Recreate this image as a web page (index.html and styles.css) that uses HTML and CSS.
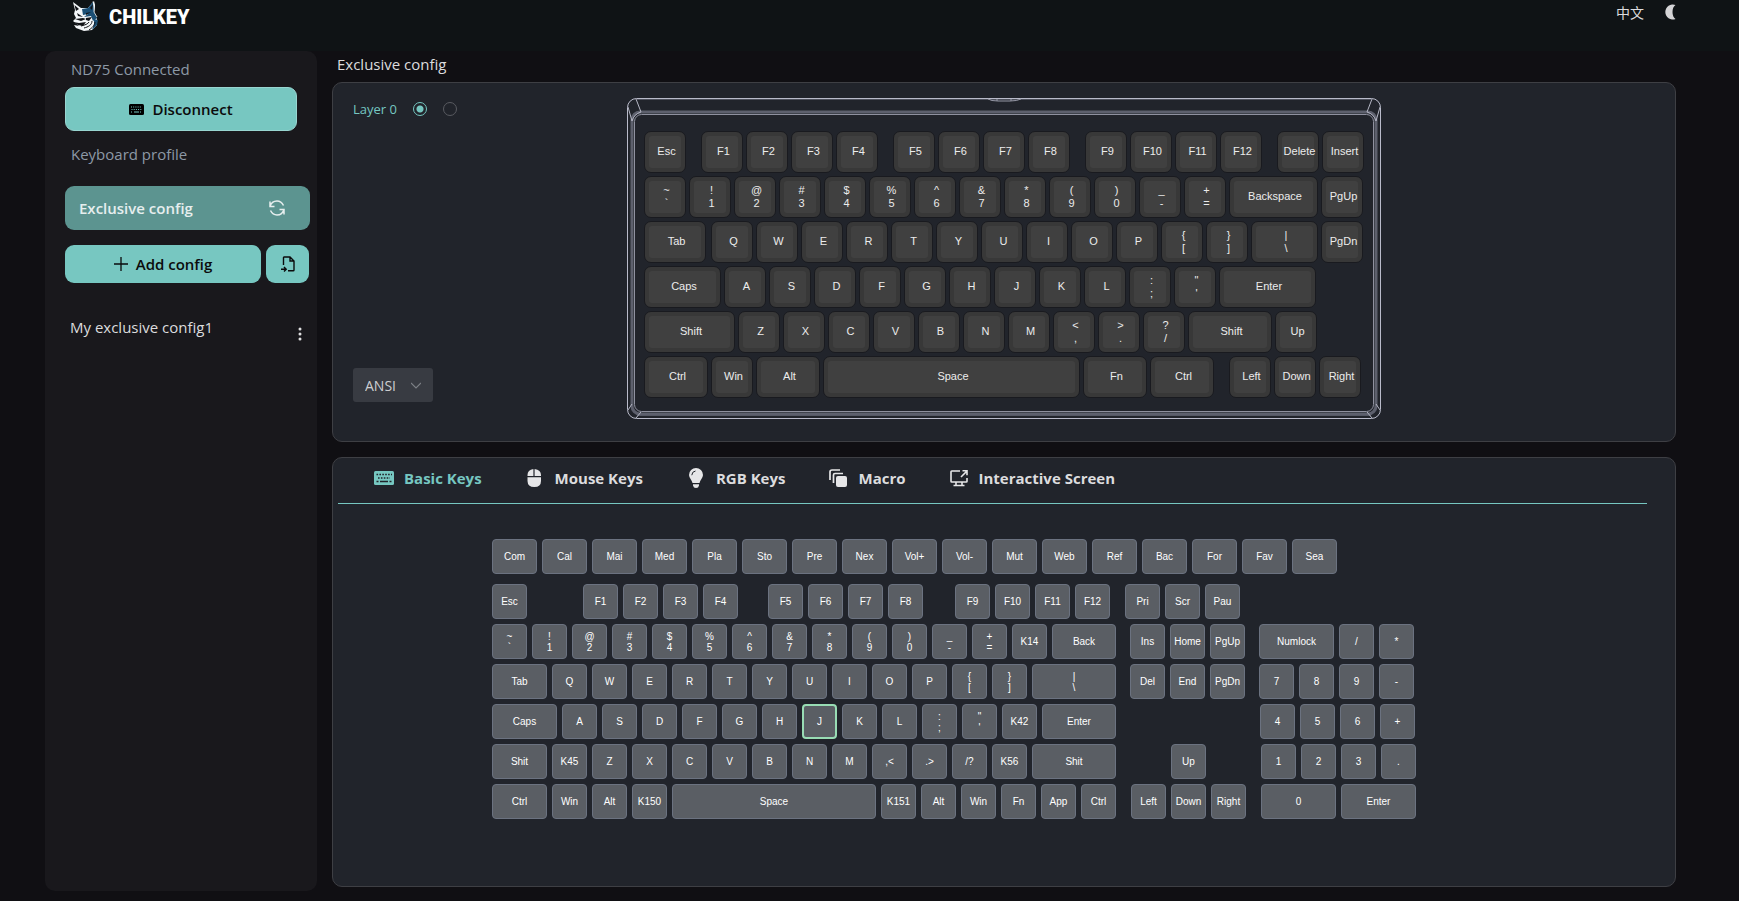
FILE: index.html
```html
<!DOCTYPE html>
<html lang="en">
<head>
<meta charset="utf-8">
<title>CHILKEY</title>
<link rel="stylesheet" href="styles.css">
</head>
<body>
<header class="topbar">
  <a class="brand" href="#">
    <svg class="brand-mark" viewBox="0 0 28 32" aria-hidden="true">
      <path fill="#f4f7f9" d="M1 2 9 8 16 8 22 1 23 5 22 13 25 19 25 25 20 30 12 31 4 28 2 25 7 26 1 21 4 18 2 14 3 10z"/>
      <path fill="#121418" d="M2.500 5 7 9 4 11zM1 22l6 1 7-1-3 4-5-1zM3 19l8-1 3 1-5 2zM5 13l6 4-5-1zM14 18l6-1-3 4-3-1z"/>
      <path fill="#1b4f75" d="M10 9l6-1 5-6 1 10 3 6-4 3-2-5-7 1 4-3-5 1zM22 19l4 1-1 5-5 5 2-6z"/>
      <path fill="#121418" d="M14 13l5-1-5 3zM18 8l3-4-1 6z"/>
      <path fill="none" stroke="#121418" d="M20 21c0 4-4 6-8 7M23 22c0 3-3 6-6 8M17 22c-1 2-4 3-8 4"/>
      <path fill="none" stroke="#f4f7f9" stroke-width=".8" d="M21 1.500 22.500 6 22 12 25 17"/>
    </svg>
    <span class="brand-name">CHILKEY</span>
  </a>
  <div class="topbar-tools">
    <button class="tool" type="button" lang="zh">中文</button>
    <button class="tool tool-moon" type="button" aria-label="Dark mode">
      <svg viewBox="0 0 12 16" width="12" height="16" aria-hidden="true"><path fill="#d4d4d6" d="M11.500 1A7.500 7.500 0 1 0 11.500 15Q8.500 13 8.500 8T11.500 1z"/></svg>
    </button>
  </div>
</header>

<div class="layout">
  <aside class="sidebar">
    <p class="side-label">ND75 Connected</p>
    <button class="btn btn-disconnect" type="button">
      <svg viewBox="0 0 15 11" width="15" height="11" aria-hidden="true"><rect width="15" height="11" rx="1.500"/><path stroke="#77c7c1" stroke-dasharray="1 1.200" d="M2 3h11M2.500 5.500h10M2 8h2M11 8h2"/><path stroke="#77c7c1" d="M5 8h5"/></svg>
      <span>Disconnect</span>
    </button>
    <p class="side-label side-label-profile">Keyboard profile</p>
    <button class="btn btn-current" type="button">
      <span>Exclusive config</span>
      <svg viewBox="0 0 16 16" width="16" height="16" fill="none" stroke="#e6eeee" stroke-width="1.500" aria-hidden="true"><path d="M1 6.500C2 3 5 1 8 1s5 1.500 6.500 4.500M1 1.500v5h4.500M15 9.500C14 13 11 15 8 15S3 13.500 1.500 10.500M15 14.500v-5h-4.500"/></svg>
    </button>
    <div class="add-row">
      <button class="btn btn-add" type="button">
        <svg viewBox="0 0 14 14" width="14" height="14" stroke="#0b0b0c" stroke-width="1.300" aria-hidden="true"><path d="M7 0v14M0 7h14"/></svg>
        <span>Add config</span>
      </button>
      <button class="btn btn-import" type="button" aria-label="Import config">
        <svg viewBox="0 0 16 16" width="16" height="16" fill="none" stroke="#0b0b0c" stroke-width="1.400" aria-hidden="true"><path d="M3.500 9V1.500Q3.500 1 4 1h6l4 4v9q0 .8-.8.8H8M10 1v4h4M1 13.200h5M4 11l2.200 2.200L4 15.400"/></svg>
      </button>
    </div>
    <div class="config-item">
      <span>My exclusive config1</span>
      <button class="more" type="button" aria-label="More">
        <svg viewBox="0 0 4 14" width="4" height="14" fill="#dedee0" aria-hidden="true"><circle cx="2" cy="2" r="1.500"/><circle cx="2" cy="7" r="1.500"/><circle cx="2" cy="12" r="1.500"/></svg>
      </button>
    </div>
  </aside>

  <main class="main">
    <h1 class="title">Exclusive config</h1>
    <section class="panel board-panel">
      <div class="board-tools">
        <div class="layers">
          <span>Layer 0</span>
          <input type="radio" name="layer" aria-label="Layer 0" checked>
          <input type="radio" name="layer" aria-label="Layer 1">
        </div>
        <div class="select">
          <select aria-label="Key layout"><option>ANSI</option><option>ISO</option></select>
          <svg viewBox="0 0 10 7" width="10" height="7" fill="none" stroke="#7d8086" stroke-width="1.200" aria-hidden="true"><path d="M0 1l5 5 5-5"/></svg>
        </div>
      </div>
      <div class="board">
        <svg class="board-frame" viewBox="0 0 754 321" fill="none" aria-hidden="true">
          <path stroke="#4d505c" d="M10 1.500h734M10 317.500h734"/>
          <rect x="5" y="14" width="744" height="302" rx="8" stroke="#5d606d" stroke-width="3"/>
          <rect x=".5" y=".5" width="753" height="320" rx="9" stroke="#b9bbca"/>
          <rect x="7.500" y="16.500" width="739" height="297" rx="7" stroke="#8f919f"/>
          <path stroke="#b4b6c4" d="M9 1l5 13M1 9l4 14M745 1l-5 13M753 9l-4 14M1 312l4-6M9 320l5-6M753 312l-4-6M745 320l-5-6M5 23q2-7 9-9M749 23q-2-7-9-9"/>
          <path stroke="#9698a6" d="M361 1q3 2 10 2h12q7 0 11-2M370 1v2M384 1v2"/>
        </svg>
        <div class="rows" id="board"></div>
      </div>
    </section>

    <section class="panel keys-panel">
      <div class="tabs" role="tablist">
        <button class="tab" type="button" role="tab" aria-selected="true">
          <svg viewBox="0 0 20 14" width="20" height="14" aria-hidden="true"><rect width="20" height="14" rx="1.500" fill="#76c7c1"/><g stroke="#21242b" stroke-width="1.600"><path stroke-dasharray="1.600 1.300" d="M2.500 3.500H18"/><path stroke-dasharray="1.600 1.300" d="M4 7h12"/><path d="M2.500 10.500h2M6 10.500h8M15.500 10.500h2"/></g></svg>
          <span>Basic Keys</span>
        </button>
        <button class="tab" type="button" role="tab" aria-selected="false">
          <svg viewBox="0 0 20 20" width="20" height="20" fill="#e6e6e8" aria-hidden="true"><path d="M8.400 1v7H2.500V7q0-5.200 5.900-6zM9.600 1v7h6.400V7q0-5.200-6.400-6zM2.500 9.200H16V13q0 6-6.700 6t-6.800-6z"/></svg>
          <span>Mouse Keys</span>
        </button>
        <button class="tab" type="button" role="tab" aria-selected="false">
          <svg viewBox="0 0 20 20" width="20" height="20" fill="#e6e6e8" aria-hidden="true"><path d="M10 0a7 7 0 0 1 7 7c0 3-3 5-3.500 8h-7C6 12 3 10 3 7a7 7 0 0 1 7-7zM7 16.200h6v1.300Q12.500 20 10 20t-3-2.500z"/><path d="M5.800 7.200Q6 3.500 9.500 3" fill="none" stroke="#21242b"/></svg>
          <span>RGB Keys</span>
        </button>
        <button class="tab" type="button" role="tab" aria-selected="false">
          <svg viewBox="0 0 20 20" width="20" height="20" aria-hidden="true"><rect x="8" y="8" width="11" height="11" rx="2" fill="#e6e6e8"/><path d="M5.500 15V7q0-1.500 1.500-1.500h8M2 12V4q0-2 2-2h8" fill="none" stroke="#e6e6e8" stroke-width="1.700"/></svg>
          <span>Macro</span>
        </button>
        <button class="tab" type="button" role="tab" aria-selected="false">
          <svg viewBox="0 0 20 20" width="20" height="20" fill="none" stroke="#e6e6e8" stroke-width="1.600" aria-hidden="true"><path d="M11 3H2.800Q2 3 2 3.800v9.400q0 .8.800.8h14.400q.8 0 .8-.8V10M7 14v3.500M13 14v3.500M4.500 17.500h11M12 9l6-6M13.500 2.800H18v4.500"/></svg>
          <span>Interactive Screen</span>
        </button>
      </div>
      <div class="pad rows" id="pad"></div>
    </section>
  </main>
</div>
<script src="keys.js"></script>
</body>
</html>
```

FILE: styles.css
```css
* { box-sizing: border-box; }

body {
  margin: 0;
  min-height: 100vh;
  display: flex;
  flex-direction: column;
  background: #100f13;
  color: #dcdcde;
  font-family: "Open Sans", "Noto Sans", "Noto Sans CJK SC", sans-serif;
  font-size: 15px;
}

button, select {
  font: inherit;
  color: inherit;
  border: 0;
  margin: 0;
  padding: 0;
  background: none;
}

.topbar {
  display: flex;
  justify-content: space-between;
  align-items: flex-start;
  height: 51px;
  padding: 0 63px 0 72px;
  background: #0f1315;
}
.brand {
  display: flex;
  align-items: flex-start;
  gap: 9px;
  color: #fff;
  text-decoration: none;
}
.brand-mark { width: 28px; height: 32px; }
.brand-name {
  font: 900 20px/34px Roboto, "Liberation Sans", sans-serif;
}
.topbar-tools { display: flex; align-items: flex-start; gap: 20px; }
.tool {
  font: 14px/24px "Noto Sans CJK SC", sans-serif;
  color: #dcdcde;
}
.tool-moon { padding-top: 4px; line-height: 0; }

.layout {
  flex: 1;
  display: flex;
  gap: 15px;
  padding: 0 63px 10px 45px;
}

.sidebar {
  width: 272px;
  flex: none;
  padding: 0 7px 0 20px;
  border-radius: 10px;
  background: #19181c;
}
.side-label {
  margin: 0;
  padding: 6px 0 6px 6px;
  line-height: 24px;
  color: #8d99a6;
}
.side-label-profile { padding: 11px 0 20px 6px; }
.btn {
  display: flex;
  align-items: center;
  justify-content: center;
  border-radius: 9px;
  background: #77c7c1;
  color: #0b0b0c;
  font-weight: 600;
}
.btn-disconnect {
  width: 232px;
  height: 44px;
  gap: 8px;
  border: 1px solid #98d5d0;
}
.btn-current {
  width: 100%;
  height: 44px;
  justify-content: space-between;
  padding: 0 25px 0 14px;
  background: #5c9490;
  color: #e6eeee;
}
.add-row { display: flex; gap: 5px; margin: 15px 1px 0 0; }
.btn-add { flex: 1; height: 38px; gap: 8px; }
.btn-import { width: 43px; height: 38px; }
.config-item {
  display: flex;
  align-items: flex-start;
  justify-content: space-between;
  padding: 32px 8px 0 5px;
  line-height: 24px;
}
.more { padding-top: 12px; line-height: 0; }

.main {
  flex: 1;
  min-width: 0;
  display: flex;
  flex-direction: column;
  padding-bottom: 4px;
}
.title {
  margin: 0;
  padding: 1px 0 6px 5px;
  font-size: 15px;
  font-weight: 400;
  line-height: 24px;
}
.panel {
  border: 1px solid #3e3f44;
  border-radius: 10px;
  background: #21242b;
}

.board-panel {
  display: grid;
  grid-template-columns: 1fr auto 1fr;
  padding: 15px 20px 22px;
}
.board-tools {
  display: flex;
  flex-direction: column;
  justify-content: space-between;
  align-items: flex-start;
  padding-bottom: 17px;
}
.layers {
  display: flex;
  align-items: center;
  gap: 16px;
  font-size: 13px;
  line-height: 22px;
  color: #76c7c1;
}
.layers input {
  appearance: none;
  width: 14px;
  height: 14px;
  margin: 0;
  border: 1px solid #595b61;
  border-radius: 50%;
}
.layers input:checked {
  border-color: #76c7c1;
  background: radial-gradient(circle, #76c7c1 0 3px, transparent 4px);
}
.select { position: relative; }
.select select {
  appearance: none;
  width: 80px;
  height: 34px;
  padding: 0 12px;
  border-radius: 3px;
  background: #383b42;
  color: #cdced1;
  font-size: 14px;
}
.select svg {
  position: absolute;
  right: 12px;
  top: 14px;
  pointer-events: none;
}

.rows { display: flex; flex-direction: column; align-items: flex-start; }
.row { display: flex; }
.key {
  flex: none;
  display: flex;
  white-space: pre;
  text-align: center;
  font-family: "Liberation Sans", Arial, sans-serif;
}
.face {
  flex: 1;
  display: flex;
  align-items: center;
  justify-content: center;
}

.board { position: relative; width: 754px; height: 321px; padding: 33px 17px; }
.board-frame { position: absolute; inset: 0; width: 100%; height: 100%; }
.board .rows { position: relative; gap: 3px; }
.board .row { gap: 3px; }
.board .key {
  height: 42px;
  padding: 4px;
  border: 1px solid #191a1f;
  border-radius: 7px;
  background: #383838;
  color: #ececec;
  font-size: 11px;
  line-height: 13px;
}
.board .face {
  min-width: 0;
  padding: 0 0 1px 3px;
  border-radius: 3px;
  background: #404040;
}

.keys-panel { flex: 1; margin-top: 15px; }
.tabs {
  display: flex;
  gap: 43px;
  height: 46px;
  margin: 0 28px 0 5px;
  padding: 0 36px 5px;
  border-bottom: 1px solid #76c7c1;
}
.tab {
  display: flex;
  align-items: center;
  gap: 10px;
  font-weight: 700;
  color: #dcdcde;
  white-space: nowrap;
}
.tab[aria-selected="true"] { color: #76c7c1; }

.pad {
  width: fit-content;
  margin: 35px auto 0;
  padding-right: 100px;
  box-sizing: content-box;
  gap: 5px;
}
.pad .row { gap: 5px; }
.pad .row:first-child { margin-bottom: 5px; }
.pad .key {
  height: 35px;
  border: 1px solid #6b7280;
  border-radius: 4px;
  background: #5a5e64;
  color: #fff;
  font-size: 10px;
  line-height: 11px;
}
.pad .key.active { border: 2px solid #98dcb4; }
```

FILE: keys.js
```js
// A row lists its keys. An entry is a label, or [label, width, extra space before the key].
const boardRows = [
  ["Esc", ["F1", 42, 12], "F2", "F3", "F4", ["F5", 42, 12], "F6", "F7", "F8", ["F9", 42, 12], "F10", "F11", "F12", ["Delete", 42, 12], "Insert"],
  ["~\n`", "!\n1", "@\n2", "#\n3", "$\n4", "%\n5", "^\n6", "&\n7", "*\n8", "(\n9", ")\n0", "_\n-", "+\n=", ["Backspace", 89], "PgUp"],
  [["Tab", 62], ["Q", 42, 2], "W", "E", "R", "T", "Y", "U", "I", "O", "P", "{\n[", "}\n]", ["|\n\\", 67], "PgDn"],
  [["Caps", 77], "A", "S", "D", "F", "G", "H", "J", "K", "L", ":\n;", "\"\n'", ["Enter", 97]],
  [["Shift", 91], "Z", "X", "C", "V", "B", "N", "M", "<\n,", ">\n.", "?\n/", ["Shift", 84], "Up"],
  [["Ctrl", 64], "Win", ["Alt", 64], ["Space", 257], ["Fn", 64], ["Ctrl", 64], ["Left", 42, 12], "Down", "Right"]
];

const mediaRow = ["Com", "Cal", "Mai", "Med", "Pla", "Sto", "Pre", "Nex", "Vol+", "Vol-", "Mut", "Web", "Ref", "Bac", "For", "Fav", "Sea"];

const padRows = [
  mediaRow.map(label => [label, 45]),
  ["Esc", ["F1", 35, 51], "F2", "F3", "F4", ["F5", 35, 25], "F6", "F7", "F8", ["F9", 35, 27], "F10", "F11", "F12", ["Pri", 35, 10], "Scr", "Pau"],
  ["~\n`", "!\n1", "@\n2", "#\n3", "$\n4", "%\n5", "^\n6", "&\n7", "*\n8", "(\n9", ")\n0", "_\n-", "+\n=", "K14", ["Back", 64], ["Ins", 35, 9], "Home", "PgUp", ["Numlock", 75, 9], "/", "*"],
  [["Tab", 55], "Q", "W", "E", "R", "T", "Y", "U", "I", "O", "P", "{\n[", "}\n]", ["|\n\\", 84], ["Del", 35, 9], "End", "PgDn", ["7", 35, 9], "8", "9", "-"],
  [["Caps", 65], "A", "S", "D", "F", "G", "H", "J", "K", "L", ":\n;", "\"\n'", "K42", ["Enter", 74], ["4", 35, 139], "5", "6", "+"],
  [["Shit", 55], "K45", "Z", "X", "C", "V", "B", "N", "M", ",<", ".>", "/?", "K56", ["Shit", 84], ["Up", 35, 50], ["1", 35, 50], "2", "3", "."],
  [["Ctrl", 55], "Win", "Alt", "K150", ["Space", 204], "K151", "Alt", "Win", "Fn", "App", "Ctrl", ["Left", 35, 10], "Down", "Right", ["0", 75, 10], ["Enter", 75]]
];

function build(target, rows, unit, activeLabel) {
  for (const keys of rows) {
    const row = document.createElement("div");
    row.className = "row";
    for (const entry of keys) {
      const [label, width = unit, space = 0] = Array.isArray(entry) ? entry : [entry];
      const key = document.createElement("button");
      key.type = "button";
      key.className = label === activeLabel ? "key active" : "key";
      key.style.width = width + "px";
      if (space) key.style.marginLeft = space + "px";
      const face = document.createElement("span");
      face.className = "face";
      face.textContent = label;
      key.append(face);
      row.append(key);
    }
    target.append(row);
  }
}

build(document.getElementById("board"), boardRows, 42);
build(document.getElementById("pad"), padRows, 35, "J");
```
